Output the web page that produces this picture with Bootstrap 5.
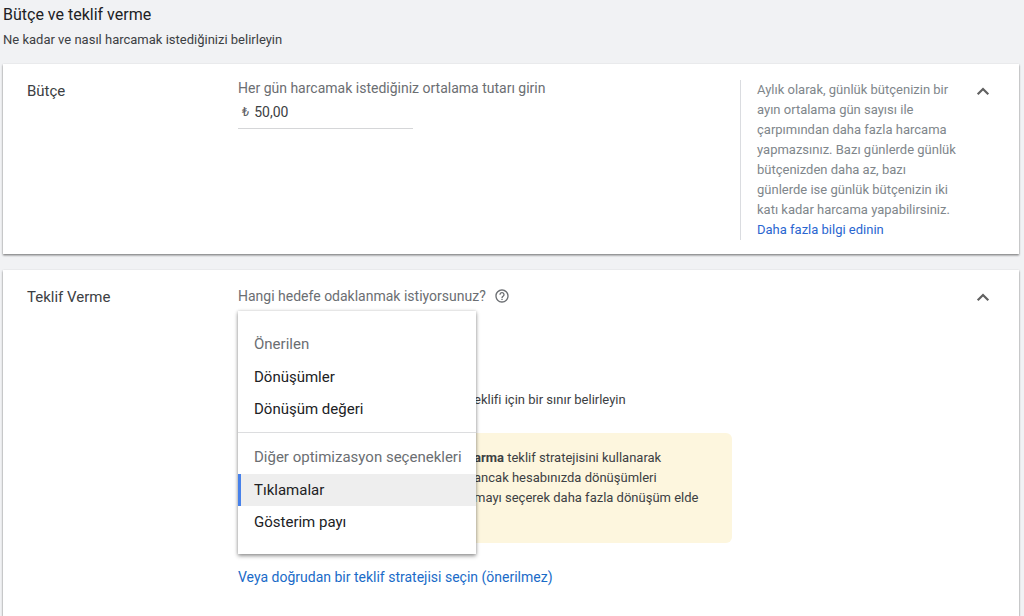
<!DOCTYPE html>
<html lang="tr">
<head>
<meta charset="utf-8">
<meta name="viewport" content="width=device-width, initial-scale=1">
<title>Bütçe ve teklif verme</title>
<link href="https://cdn.jsdelivr.net/npm/bootstrap@5.3.0/dist/css/bootstrap.min.css" rel="stylesheet">
<style>
body { background: #f1f2f4; font-family: Roboto, "Liberation Sans", sans-serif; font-size: 13px; line-height: 20px; color: #3c4043; }
a { color: #2a66d0; text-decoration: none; }
.page-head { padding: 5px 3px 14px; }
.page-title { font-size: 16px; line-height: 20px; color: #202124; font-weight: 400; }
.page-sub { margin-top: 5px; }
.panels { padding: 0 5px 0 3px; }
.panel { background: #fff; box-shadow: 0 1px 2px rgba(0,0,0,.45), 0 2px 2px rgba(0,0,0,.1); padding: 16px 24px 14px; }
.panel-name { flex: 0 0 211px; font-size: 15px; font-weight: 400; line-height: 20px; padding-top: 1px; }
.question { font-size: 14px; line-height: 20px; color: #6b6e72; }
.budget-label { line-height: 16px; }
.amount { width: 175px; border-bottom: 1px solid #d5d6d8; height: 33px; padding-left: 4px; gap: 5px; }
.amount span { color: #5f6368; }
.amount input { width: 100px; border: 0; padding: 0; font-size: 14px; line-height: 20px; color: #3c4043; background: none; outline: 0; }
.help-text { width: 223px; border-left: 1px solid #dadce0; padding-left: 16px; color: #80868b; }
.toggle { border: 0; background: none; padding: 0; width: 24px; height: 24px; line-height: 1; color: #616161; }
.goal { margin-top: 84px; }
.goal, .notice { padding-left: 236px; }
.notice { width: 494px; max-width: 100%; background: #fdf6de; border-radius: 6px; margin-top: 23px; padding-top: 15px; padding-bottom: 35px; white-space: nowrap; }
.menu { top: 25px; left: 0; width: 238px; background: #fff; box-shadow: 0 2px 4px rgba(0,0,0,.4), 0 0 3px rgba(0,0,0,.15); padding: 17px 0 16px; font-size: 15px; z-index: 2; }
.menu-head { color: #6b6e72; height: 33px; line-height: 33px; padding-left: 16px; white-space: nowrap; }
.menu-item { display: block; width: 100%; border: 0; border-left: 3px solid transparent; background: none; height: 32px; line-height: 32px; padding: 0 0 0 13px; text-align: left; color: #202124; }
.menu-item.chosen { background: #eee; border-left-color: #4781ea; }
.menu-line { height: 1px; background: #dcdddf; margin: 7px 0 8px; }
.direct { display: inline-block; font-size: 14px; margin-top: 24px; color: #1a6bc8; }
</style>
</head>
<body class="d-flex flex-column min-vh-100">
<header class="page-head">
  <h1 class="page-title mb-0">Bütçe ve teklif verme</h1>
  <p class="page-sub mb-0">Ne kadar ve nasıl harcamak istediğinizi belirleyin</p>
</header>
<main class="panels d-flex flex-column flex-grow-1 gap-3">
  <section class="panel d-flex align-items-start">
    <h2 class="panel-name mb-0">Bütçe</h2>
    <div class="flex-grow-1">
      <label class="question budget-label d-block" for="budget">Her gün harcamak istediğiniz ortalama tutarı girin</label>
      <div class="amount d-flex align-items-center">
        <span>₺</span><input id="budget" type="text" value="50,00">
      </div>
    </div>
    <div class="help-text me-2">Aylık olarak, günlük bütçenizin bir<br>ayın ortalama gün sayısı ile<br>çarpımından daha fazla harcama<br>yapmazsınız. Bazı günlerde günlük<br>bütçenizden daha az, bazı<br>günlerde ise günlük bütçenizin iki<br>katı kadar harcama yapabilirsiniz.<br><a href="#">Daha fazla bilgi edinin</a></div>
    <button class="toggle" type="button" aria-label="Daralt"><svg width="24" height="24" viewBox="0 0 24 24" fill="none" stroke="currentColor" stroke-width="2.2"><path d="M6.7 14.3 12 9l5.300 5.300"/></svg></button>
  </section>
  <section class="panel d-flex align-items-start flex-grow-1">
    <h2 class="panel-name mb-0">Teklif Verme</h2>
    <div class="flex-grow-1 position-relative">
      <div class="question d-flex align-items-center gap-2">Hangi hedefe odaklanmak istiyorsunuz?
        <svg width="16" height="16" viewBox="0 0 24 24" fill="#6b6e72" aria-hidden="true"><path d="M11 18h2v-2h-2v2zm1-16C6.480 2 2 6.480 2 12s4.480 10 10 10 10-4.480 10-10S17.520 2 12 2zm0 18c-4.410 0-8-3.590-8-8s3.590-8 8-8 8 3.590 8 8-3.590 8-8 8zm0-14c-2.210 0-4 1.790-4 4h2c0-1.100.9-2 2-2s2 .9 2 2c0 2-3 1.750-3 5h2c0-2.250 3-2.500 3-5 0-2.210-1.790-4-4-4z"/></svg>
      </div>
      <div class="menu position-absolute">
        <div class="menu-head">Önerilen</div>
        <button class="menu-item" type="button">Dönüşümler</button>
        <button class="menu-item" type="button">Dönüşüm değeri</button>
        <div class="menu-line"></div>
        <div class="menu-head">Diğer optimizasyon seçenekleri</div>
        <button class="menu-item chosen" type="button">Tıklamalar</button>
        <button class="menu-item" type="button">Gösterim payı</button>
      </div>
      <div class="goal">eklifi için bir sınır belirleyin</div>
      <div class="notice">
        <div><b>arma</b> teklif stratejisini kullanarak</div>
        <div>ancak hesabınızda dönüşümleri</div>
        <div>mayı seçerek daha fazla dönüşüm elde</div>
      </div>
      <a class="direct" href="#">Veya doğrudan bir teklif stratejisi seçin (önerilmez)</a>
    </div>
    <button class="toggle" type="button" aria-label="Daralt"><svg width="24" height="24" viewBox="0 0 24 24" fill="none" stroke="currentColor" stroke-width="2.2"><path d="M6.700 14.300 12 9l5.300 5.300"/></svg></button>
  </section>
</main>
<script src="https://cdn.jsdelivr.net/npm/bootstrap@5.3.0/dist/js/bootstrap.bundle.min.js"></script>
</body>
</html>
